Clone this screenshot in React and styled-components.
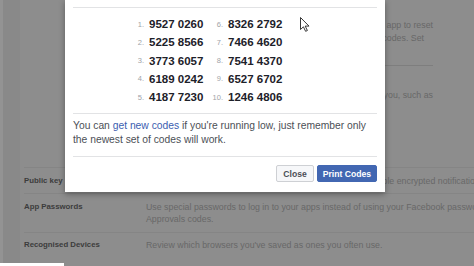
import React from "react";
import styled, { createGlobalStyle } from "styled-components";

const GlobalStyle = createGlobalStyle`
  html, body {
    margin: 0;
    padding: 0;
    background: #8b8b8b;
  }
`;

const Screen = styled.div`
  position: relative;
  width: 474px;
  height: 266px;
  overflow: hidden;
  display: flex;
  background: #8b8b8b;
  font-family: "Liberation Sans", Arial, sans-serif;
`;

const Gutter = styled.div`
  width: 20px;
  flex-shrink: 0;
  border-left: 3px solid #939393;
  box-sizing: border-box;
  background: #898989;
`;

const Panel = styled.div`
  flex: 1;
  display: flex;
  flex-direction: column;
  background: #8d8d8d;
  padding-left: 4px;
`;

const Upper = styled.div`
  height: 167px;
  display: grid;
  grid-template-columns: 122px 287px;
`;

const DescBlock = styled.div`
  font-size: 8.8px;
  line-height: 13px;
  color: #686868;
  text-align: right;
  padding-top: ${(p) => p.$top || 0}px;
`;

const Line = styled.div`
  white-space: nowrap;
  padding-right: ${(p) => p.$pad || 0}px;
`;

const SubRule = styled.div`
  border-top: 1px solid #7e7e7e;
  margin-top: ${(p) => p.$top}px;
`;

const Row = styled.div`
  display: grid;
  grid-template-columns: 122px 1fr;
  align-items: start;
  height: ${(p) => p.$h}px;
  padding-top: ${(p) => p.$pt}px;
  border-top: 1px solid #858585;
  box-sizing: border-box;
`;

const Label = styled.div`
  font-size: 7.8px;
  line-height: 12px;
  font-weight: bold;
  color: #3c3c3c;
  white-space: nowrap;
`;

const Desc = styled.div`
  font-size: 8.8px;
  line-height: 12px;
  color: #686868;
  white-space: nowrap;
`;

const Modal = styled.div`
  position: absolute;
  left: 65px;
  top: 0;
  width: 320px;
  height: 192px;
  box-sizing: border-box;
  padding: 0 8px;
  background: #fff;
  box-shadow: 0 2px 6px rgba(0, 0, 0, 0.35);
  display: flex;
  flex-direction: column;
`;

const Rule = styled.div`
  border-top: 1px solid #e2e3e5;
  margin-top: ${(p) => p.$top || 0}px;
`;

const CodeGrid = styled.div`
  display: grid;
  grid-template-columns: 12px 56px 13px 60px;
  grid-auto-rows: 18.25px;
  column-gap: 5px;
  align-items: center;
  padding: 7px 0 7px 59px;
`;

const Num = styled.span`
  font-size: 7.5px;
  color: #a0a3a8;
  text-align: right;
`;

const Code = styled.span`
  font-size: 11.5px;
  font-weight: bold;
  color: #1d2129;
  white-space: nowrap;
`;

const Note = styled.p`
  margin: 0;
  padding: 5px 0 9px;
  font-size: 10.3px;
  line-height: 14px;
  color: #4b4f56;
  white-space: nowrap;
`;

const NoteLink = styled.span`
  color: #3b5db0;
`;

const Footer = styled.div`
  display: flex;
  justify-content: flex-end;
  gap: 3px;
  padding-top: 8px;
`;

const Button = styled.button`
  height: 17px;
  padding: 0 ${(p) => (p.$primary ? 5 : 6)}px;
  font-family: inherit;
  font-size: 8.6px;
  font-weight: bold;
  border-radius: 2px;
  border: 1px solid ${(p) => (p.$primary ? "#4267b2" : "#ced0d4")};
  background: ${(p) => (p.$primary ? "#4267b2" : "#f6f7f9")};
  color: ${(p) => (p.$primary ? "#fff" : "#4b4f56")};
  cursor: pointer;
`;

const Cursor = styled.svg`
  position: absolute;
  left: 300px;
  top: 17px;
`;

const ProgressBar = styled.div`
  position: absolute;
  left: 0;
  bottom: 0;
  width: 64px;
  height: 3px;
  background: #fff;
`;

const codes = [
  "9527 0260",
  "5225 8566",
  "3773 6057",
  "6189 0242",
  "4187 7230",
  "8326 2792",
  "7466 4620",
  "7541 4370",
  "6527 6702",
  "1246 4806",
];

export default function App() {
  return (
    <Screen>
      <GlobalStyle />
      <Gutter />
      <Panel>
        <Upper>
          <div />
          <div>
            <DescBlock $top={19}>
              <Line>Use a code generator in the Facebook app to reset</Line>
              <Line $pad={9}>your password or get recovery codes. Set</Line>
            </DescBlock>
            <SubRule $top={20} />
            <DescBlock $top={23}>
              <Line>Get alerts when someone logs in from a place you, such as</Line>
            </DescBlock>
          </div>
        </Upper>
        <Row $h={26} $pt={7}>
          <Label>Public key</Label>
          <Desc>Manage your OpenPGP public keys on your profiles and enable encrypted notification emails</Desc>
        </Row>
        <Row $h={39} $pt={7}>
          <Label>App Passwords</Label>
          <Desc>
            Use special passwords to log in to your apps instead of using your Facebook password or Login
            <br />
            Approvals codes.
          </Desc>
        </Row>
        <Row $h={28} $pt={6}>
          <Label>Recognised Devices</Label>
          <Desc>Review which browsers you've saved as ones you often use.</Desc>
        </Row>
      </Panel>

      <Modal>
        <Rule $top={7} />
        <CodeGrid>
          {[0, 1, 2, 3, 4].map((i) => (
            <React.Fragment key={i}>
              <Num>{i + 1}.</Num>
              <Code>{codes[i]}</Code>
              <Num>{i + 6}.</Num>
              <Code>{codes[i + 5]}</Code>
            </React.Fragment>
          ))}
        </CodeGrid>
        <Rule />
        <Note>
          You can <NoteLink>get new codes</NoteLink> if you're running low, just remember only
          <br />
          the newest set of codes will work.
        </Note>
        <Rule />
        <Footer>
          <Button>Close</Button>
          <Button $primary>Print Codes</Button>
        </Footer>
      </Modal>

      <Cursor width="11" height="15" viewBox="0 0 11 15">
        <path
          d="M0.5 0.5 L0.5 12.5 L3.4 9.8 L5.6 14.3 L7.4 13.5 L5.2 9.1 L9 9.1 Z"
          fill="#fff"
          stroke="#222"
          strokeWidth="0.9"
          strokeLinejoin="round"
        />
      </Cursor>
      <ProgressBar />
    </Screen>
  );
}
